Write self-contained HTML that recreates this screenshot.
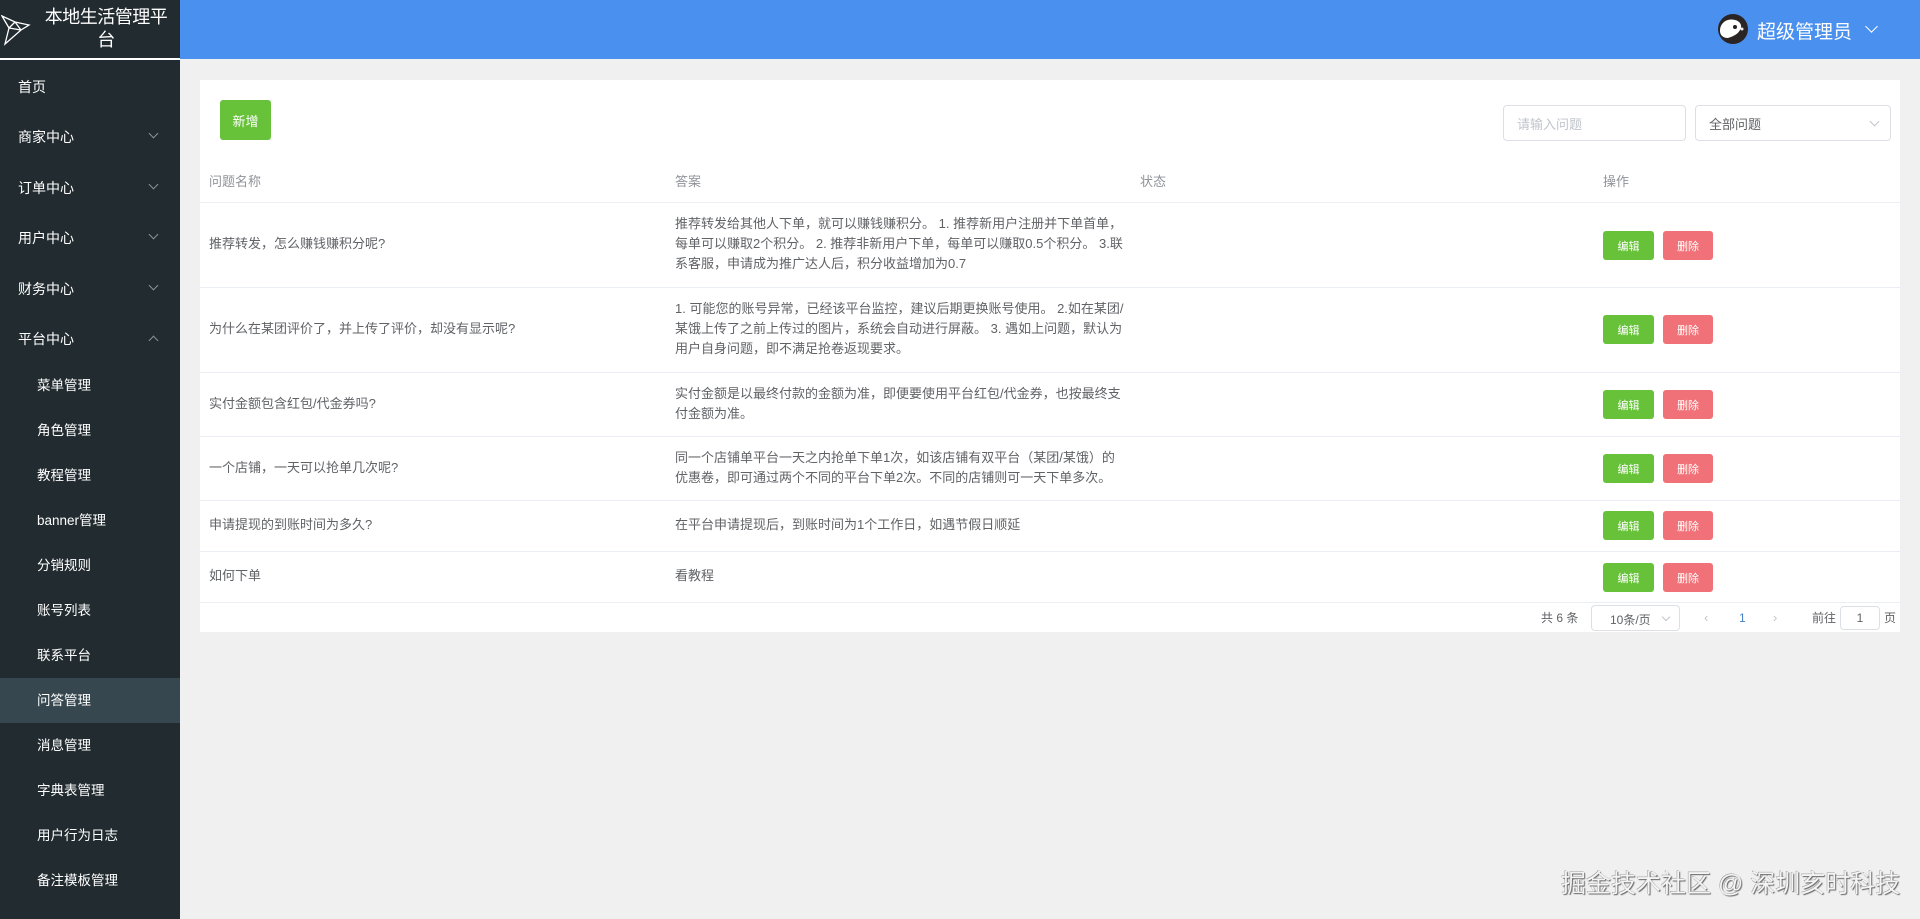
<!DOCTYPE html>
<html><head><meta charset="utf-8">
<style>
*{margin:0;padding:0;box-sizing:border-box}
body{width:1920px;height:919px;background:#f0f0f0;font-family:"Liberation Sans","Noto Sans CJK SC",sans-serif;position:relative;overflow:hidden}
.side{position:absolute;left:0;top:0;width:180px;height:919px;background:#222b30}
.logo{height:60px;border-bottom:2px solid #fff;position:relative;color:#fff}
.logo .t{position:absolute;left:38px;width:136px;text-align:center;top:6px;font-size:18px;line-height:23px;letter-spacing:-0.5px}
.mi{position:absolute;left:18px;color:#fff;font-size:14px}
.ar{position:absolute;left:150px;width:7px;height:7px;border-right:1px solid #8a9299;border-bottom:1px solid #8a9299;transform:rotate(45deg)}
.up{transform:rotate(-135deg)}
.si{position:absolute;left:37px;color:#fff;font-size:13.5px}
.act{position:absolute;left:0;top:678px;width:180px;height:45px;background:#37474f}
.head{position:absolute;left:180px;top:0;width:1740px;height:59px;background:#4a90ee}
.card{position:absolute;left:200px;top:80px;width:1700px;height:552px;background:#fff}
.btn{position:absolute;border-radius:3px;color:#fff;font-size:11px;display:flex;align-items:center;justify-content:center}
.g{background:#67c23a}.r{background:#f07278}
.line{position:absolute;left:200px;width:1700px;height:1px;background:#ebeef5}
.tx{position:absolute;font-size:13px;color:#606266;line-height:20px}
.th{position:absolute;font-size:13px;color:#909399;top:171px}
.inp{position:absolute;border:1px solid #dcdfe6;border-radius:4px;background:#fff;font-size:13px}
</style></head><body>
<div class="side">
  <div class="logo">
    <svg style="position:absolute;left:1px;top:14px" width="30" height="32" viewBox="0 0 30 32" fill="none" stroke="#fff" stroke-width="1.3"><path d="M1 2 L14 8 L28 11 L20 16 L4 30 L8 14 Z M8 14 L20 16 M14 8 L8 14 M1 2 L8 14 M14 8 L20 16"/></svg>
    <div class="t">本地生活管理平台</div>
  </div>
  <div class="mi" style="top:77px">首页</div>
  <div class="mi" style="top:127px">商家中心</div><div class="ar" style="top:130px"></div>
  <div class="mi" style="top:178px">订单中心</div><div class="ar" style="top:181px"></div>
  <div class="mi" style="top:228px">用户中心</div><div class="ar" style="top:231px"></div>
  <div class="mi" style="top:279px">财务中心</div><div class="ar" style="top:282px"></div>
  <div class="mi" style="top:329px">平台中心</div><div class="ar up" style="top:337px"></div>
  <div class="act"></div>
  <div class="si" style="top:374px">菜单管理</div>
  <div class="si" style="top:419px">角色管理</div>
  <div class="si" style="top:464px">教程管理</div>
  <div class="si" style="top:509px">banner管理</div>
  <div class="si" style="top:554px">分销规则</div>
  <div class="si" style="top:599px">账号列表</div>
  <div class="si" style="top:644px">联系平台</div>
  <div class="si" style="top:689px">问答管理</div>
  <div class="si" style="top:734px">消息管理</div>
  <div class="si" style="top:779px">字典表管理</div>
  <div class="si" style="top:824px">用户行为日志</div>
  <div class="si" style="top:869px">备注模板管理</div>
</div>
<div class="head">
  <svg style="position:absolute;left:1538px;top:14px" width="30" height="30" viewBox="0 0 30 30"><circle cx="15" cy="15" r="15" fill="#2a2424"/><path d="M2 17 C2 8 10 4 17 6 C22 7 25 12 22 16 C20 20 16 22 10 24 C5 24 2 21 2 17Z" fill="#fff"/><circle cx="17" cy="13" r="2" fill="#222"/><circle cx="24" cy="15" r="1.5" fill="#eee"/></svg>
  <div style="position:absolute;left:1577px;top:17px;color:#fff;font-size:19px">超级管理员</div>
  <div style="position:absolute;left:1687px;top:22px;width:9px;height:9px;border-right:1.5px solid #fff;border-bottom:1.5px solid #fff;transform:rotate(45deg)"></div>
</div>
<div class="card"></div>
<div class="btn g" style="left:220px;top:100px;width:51px;height:40px;font-size:13px">新增</div>
<div class="inp" style="left:1503px;top:105px;width:183px;height:36px;color:#c0c4cc;padding:8px 13px">请输入问题</div>
<div class="inp" style="left:1695px;top:105px;width:196px;height:36px;color:#606266;padding:8px 13px">全部问题<div style="position:absolute;right:12px;top:12px;width:7px;height:7px;border-right:1px solid #c0c4cc;border-bottom:1px solid #c0c4cc;transform:rotate(45deg)"></div></div>
<div class="th" style="left:209px">问题名称</div>
<div class="th" style="left:675px">答案</div>
<div class="th" style="left:1140px">状态</div>
<div class="th" style="left:1603px">操作</div>
<div class="line" style="top:202px"></div>
<div class="line" style="top:287px"></div>
<div class="line" style="top:372px"></div>
<div class="line" style="top:436px"></div>
<div class="line" style="top:500px"></div>
<div class="line" style="top:551px"></div>
<div class="line" style="top:602px"></div>

<div class="tx" style="left:209px;top:234px">推荐转发，怎么赚钱赚积分呢?</div>
<div class="tx" style="left:675px;top:214px;width:460px">推荐转发给其他人下单，就可以赚钱赚积分。 1. 推荐新用户注册并下单首单，每单可以赚取2个积分。 2. 推荐非新用户下单，每单可以赚取0.5个积分。 3.联系客服，申请成为推广达人后，积分收益增加为0.7</div>
<div class="tx" style="left:209px;top:319px">为什么在某团评价了，并上传了评价，却没有显示呢?</div>
<div class="tx" style="left:675px;top:299px;width:450px">1. 可能您的账号异常，已经该平台监控，建议后期更换账号使用。 2.如在某团/某饿上传了之前上传过的图片，系统会自动进行屏蔽。 3. 遇如上问题，默认为用户自身问题，即不满足抢卷返现要求。</div>
<div class="tx" style="left:209px;top:394px">实付金额包含红包/代金券吗?</div>
<div class="tx" style="left:675px;top:384px;width:450px">实付金额是以最终付款的金额为准，即便要使用平台红包/代金券，也按最终支付金额为准。</div>
<div class="tx" style="left:209px;top:458px">一个店铺，一天可以抢单几次呢?</div>
<div class="tx" style="left:675px;top:448px;width:450px">同一个店铺单平台一天之内抢单下单1次，如该店铺有双平台（某团/某饿）的优惠卷，即可通过两个不同的平台下单2次。不同的店铺则可一天下单多次。</div>
<div class="tx" style="left:209px;top:515px">申请提现的到账时间为多久?</div>
<div class="tx" style="left:675px;top:515px">在平台申请提现后，到账时间为1个工作日，如遇节假日顺延</div>
<div class="tx" style="left:209px;top:566px">如何下单</div>
<div class="tx" style="left:675px;top:566px">看教程</div>

<div class="btn g" style="left:1603px;top:231px;width:51px;height:29px">编辑</div><div class="btn r" style="left:1663px;top:231px;width:50px;height:29px">删除</div>
<div class="btn g" style="left:1603px;top:315px;width:51px;height:29px">编辑</div><div class="btn r" style="left:1663px;top:315px;width:50px;height:29px">删除</div>
<div class="btn g" style="left:1603px;top:390px;width:51px;height:29px">编辑</div><div class="btn r" style="left:1663px;top:390px;width:50px;height:29px">删除</div>
<div class="btn g" style="left:1603px;top:454px;width:51px;height:29px">编辑</div><div class="btn r" style="left:1663px;top:454px;width:50px;height:29px">删除</div>
<div class="btn g" style="left:1603px;top:511px;width:51px;height:29px">编辑</div><div class="btn r" style="left:1663px;top:511px;width:50px;height:29px">删除</div>
<div class="btn g" style="left:1603px;top:563px;width:51px;height:29px">编辑</div><div class="btn r" style="left:1663px;top:563px;width:50px;height:29px">删除</div>

<div class="tx" style="left:1541px;top:608px;font-size:12px">共 6 条</div>
<div class="inp" style="left:1591px;top:605px;width:89px;height:26px;color:#606266;font-size:12px;padding:5px 0 0 18px">10条/页<div style="position:absolute;right:10px;top:8px;width:6px;height:6px;border-right:1px solid #c0c4cc;border-bottom:1px solid #c0c4cc;transform:rotate(45deg)"></div></div>
<div class="tx" style="left:1704px;top:608px;color:#c0c4cc">‹</div>
<div class="tx" style="left:1739px;top:608px;color:#4a80c8;font-size:12px">1</div>
<div class="tx" style="left:1773px;top:608px;color:#c0c4cc">›</div>
<div class="tx" style="left:1812px;top:608px;font-size:12px">前往</div>
<div class="inp" style="left:1840px;top:606px;width:40px;height:24px;color:#606266;font-size:12px;text-align:center;padding-top:4px">1</div>
<div class="tx" style="left:1884px;top:608px;font-size:12px">页</div>

<div style="position:absolute;left:1561px;top:864px;font-size:25px;color:#f4f4f4;text-shadow:1px 1px 1px #666,-0.5px -0.5px 0 #999">掘金技术社区 @ 深圳亥时科技</div>
</body></html>
